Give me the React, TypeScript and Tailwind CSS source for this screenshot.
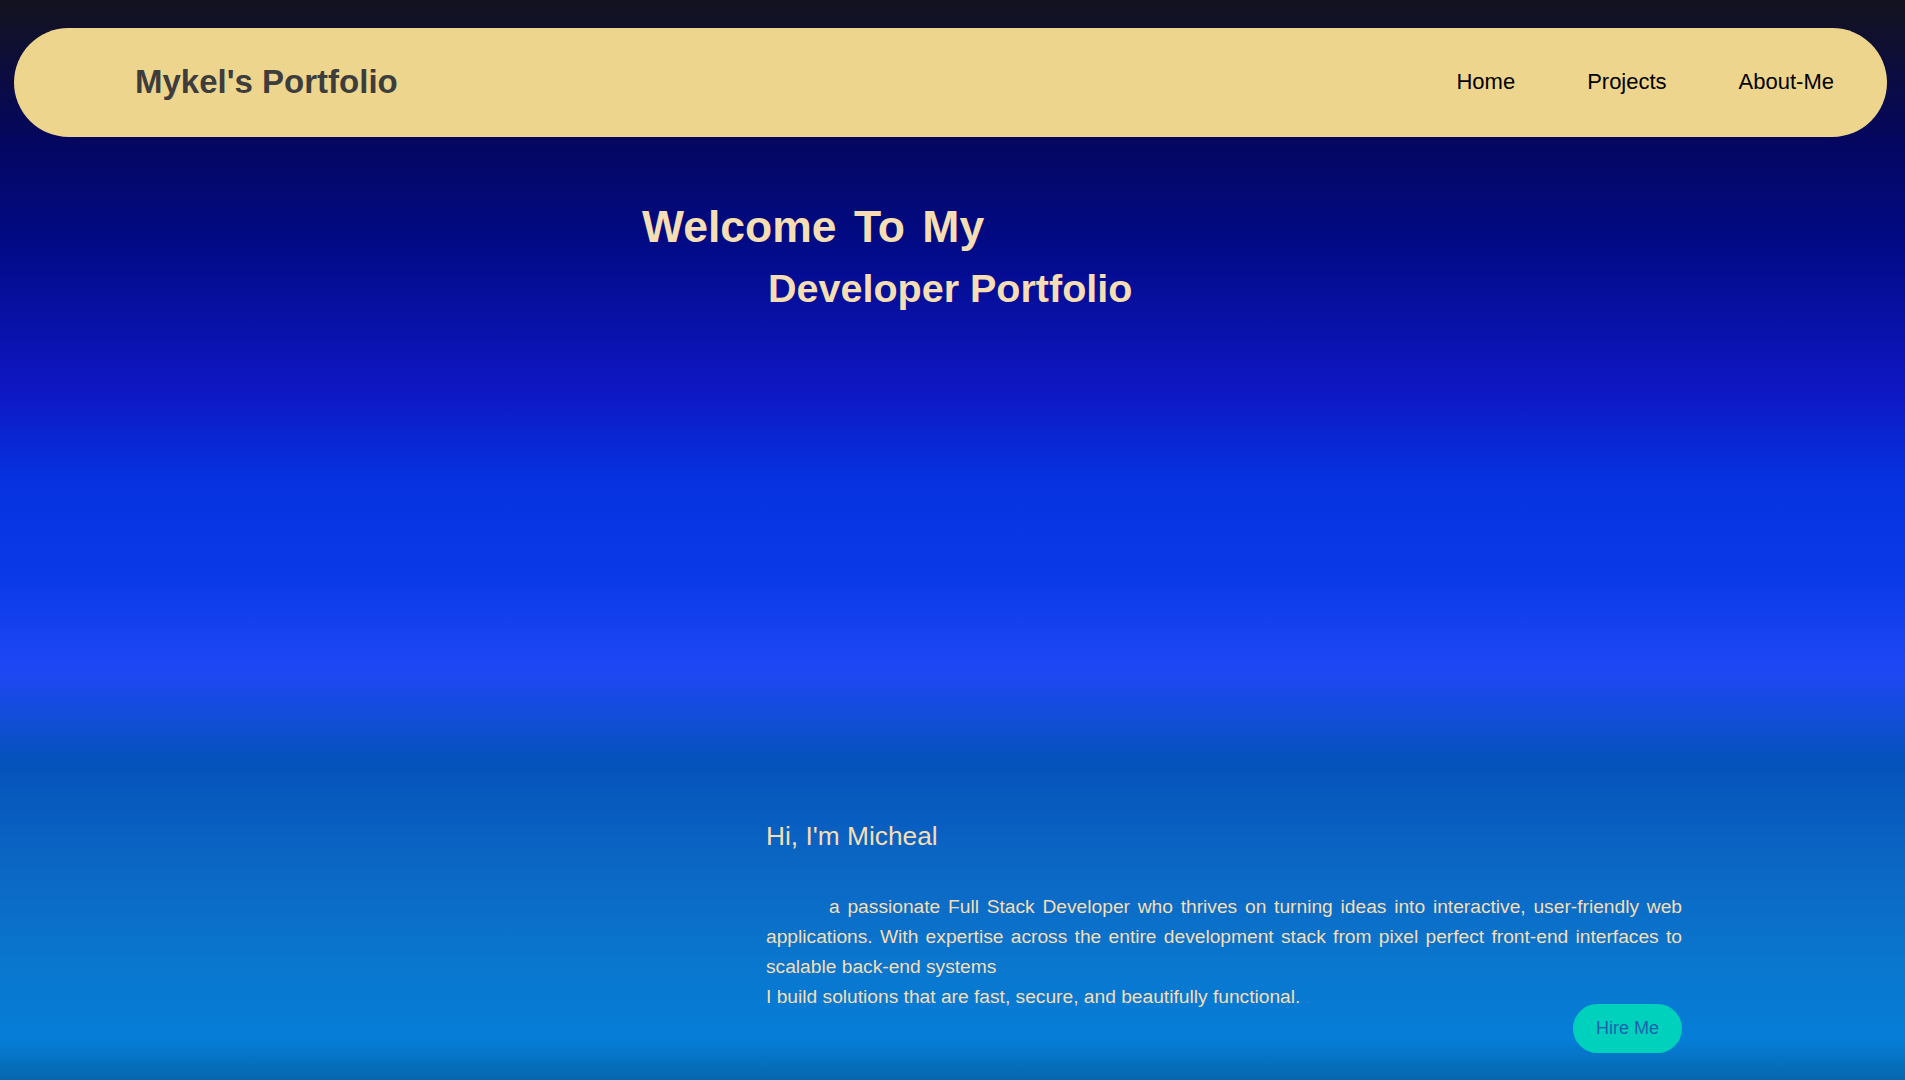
const navLinks = ["Home", "Projects", "About-Me"]

export default function App() {
  return (
    <div className="h-[1080px] w-full overflow-hidden font-['Liberation_Sans',Arial,sans-serif] bg-[linear-gradient(to_bottom,#12121f_0px,#111128_24px,#04065f_140px,#020b88_250px,#0f17c4_390px,#0632df_480px,#0b3ae9_580px,#1f48f5_672px,#0452bb_762px,#0b66c3_860px,#0a76cd_960px,#057ed8_1040px,#0766ac_1080px)]">
      {/* top bar */}
      <nav className="mt-[28px] ml-[14px] mr-[18px] flex h-[109px] items-center justify-between rounded-full bg-[#eed58e] pl-[121px] pr-[53px]">
        <h2 className="-mt-[2px] text-[33px] font-bold text-[#3d3d3d]">Mykel's Portfolio</h2>
        <ul className="-mt-[2px] flex gap-[72px] text-[22px] text-black">
          {navLinks.map((link) => (
            <li key={link}>
              <a href="#">{link}</a>
            </li>
          ))}
        </ul>
      </nav>

      <header className="pt-[68px] font-bold text-[#f5deb3]">
        <h1 className="pl-[642px] text-[44.5px] leading-none [word-spacing:5px]">Welcome To My</h1>
        <h1 className="mt-[19px] pl-[768px] text-[39.5px] leading-none">Developer Portfolio</h1>
      </header>

      <section className="mt-[515px] ml-[766px] w-[916px] text-[#f5deb3]">
        <h3 className="text-[26.3px] leading-none">Hi, I'm Micheal</h3>
        <p className="mt-[43px] text-justify indent-[63px] text-[19.2px] leading-[29.75px]">
          a passionate Full Stack Developer who thrives on turning ideas into interactive, user-friendly web
          applications. With expertise across the entire development stack from pixel perfect front-end interfaces
          to scalable back-end systems
          <br />I build solutions that are fast, secure, and beautifully functional.
        </p>
        <div className="-mt-[7px] flex justify-end">
          <button className="h-[49px] w-[109px] rounded-full bg-[#00d1bd] text-[18px] text-[#1d62ae]">Hire Me</button>
        </div>
      </section>
    </div>
  )
}
